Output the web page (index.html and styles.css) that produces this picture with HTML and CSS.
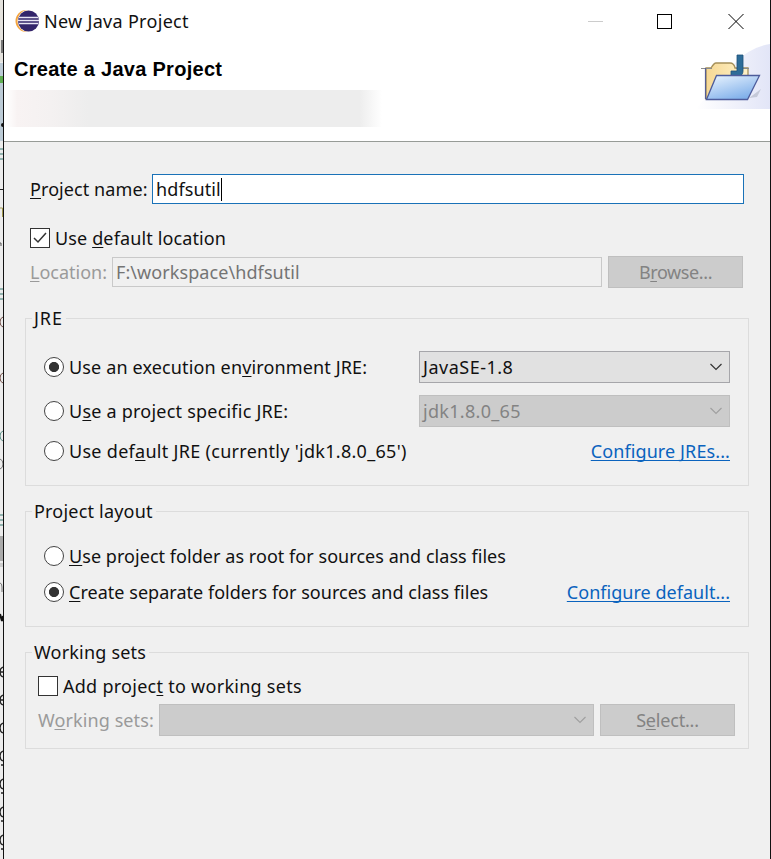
FILE: index.html
```
<!DOCTYPE html>
<html lang="en">
<head>
  <meta charset="UTF-8">
  <meta name="viewport" content="width=device-width, initial-scale=1.0">
  <title>New Java Project</title>
  <link rel="stylesheet" href="styles.css">
</head>
<body>
  <!-- Sliver of the editor behind the dialog -->
  <svg class="backdrop" width="3" height="859" viewBox="0 0 3 859">
    <rect width="3" height="859" fill="#ececec"/>
    <rect width="3" height="62" fill="#e4e2dd"/>
    <rect x="1" y="40" width="2" height="13" fill="#777"/>
    <rect y="63" width="3" height="78" fill="#bccbd6"/>
    <rect y="76" width="3" height="7" fill="#5fae50"/>
    <circle cx="3" cy="125" r="2" fill="#111"/>
    <path d="M0 149h3M0 154h3M0 159h3M0 289h3M0 294h3M0 299h3M0 515h3M0 520h3M0 525h3" stroke="#397b72"/>
    <path d="M0 189.500h3" stroke="#222"/>
    <path d="M0 208h2.500v9" stroke="#a39a50" fill="none"/>
    <path d="M0 243h1v3" stroke="#555" fill="none"/>
    <rect y="536" width="3" height="25" fill="#aaa"/>
    <rect y="563" width="3" height="4" fill="#ccc"/>
    <path d="M0 614l2 7 1-5" stroke="#111" stroke-width="2" fill="none"/>
    <g fill="none" stroke="#777">
      <path d="M3 317q-3 1-3 5t3 5M3 373q-3 1-3 5t3 5" stroke="#74504a"/>
      <path d="M3 431q-3 1-3 5t3 5" stroke="#5b8f88"/>
      <path d="M0 459q3 1 3 5t-3 5M0 583q2 0 2 4v5"/>
    </g>
    <g fill="none" stroke="#222" stroke-width="1.300">
      <path d="M3 667q-3 1-3 5t3 5M0 672h3M3 695q-3 1-3 5t3 5M0 700h3"/>
      <path d="M3 723q-3 1-3 5t3 5M3 751q-3 1-3 5t3 5M3 779q-3 1-3 5t3 5M3 807q-3 1-3 5t3 5M3 835q-3 1-3 5t3 5"/>
      <path d="M1 765h2M1 793h2M1 821h2M1 849h2"/>
    </g>
  </svg>

  <div class="dialog">
    <header class="banner">
      <div class="titlebar">
        <svg class="logo" width="25" height="24" viewBox="0 0 25 24">
          <circle cx="11.500" cy="12" r="11" fill="#f3a33d"/>
          <circle cx="13.500" cy="12" r="11" fill="#fff"/>
          <circle cx="13.500" cy="12" r="10.500" fill="#33256b"/>
          <path d="M4 8.500h19M3 11.500h21M4 14.500h19" stroke="#e8e5f4" stroke-width="1.500"/>
        </svg>
        <span class="title">New Java Project</span>
        <svg class="window-buttons" width="160" height="20" viewBox="0 0 160 20">
          <path d="M3 10.500h15" stroke="#ccc"/>
          <rect x="72.500" y="3.500" width="14" height="14" fill="none" stroke="#000"/>
          <path d="M143.500 3l15 15M158.500 3l-15 15" stroke="#000"/>
        </svg>
      </div>
      <h1>Create a Java Project</h1>
      <div class="message"></div>
      <svg class="wizard-icon" width="74" height="68" viewBox="0 0 74 68">
        <defs>
          <linearGradient id="glow" x1="0" y1="0" x2="1" y2="0">
            <stop offset="0" stop-color="#fff"/>
            <stop offset="1" stop-color="#e2e5f7"/>
          </linearGradient>
          <linearGradient id="front" x1="0" y1="0" x2="0.600" y2="1">
            <stop offset="0" stop-color="#edf6ff"/>
            <stop offset="1" stop-color="#80b0ea"/>
          </linearGradient>
          <linearGradient id="back" x1="0" y1="0" x2="1" y2="0">
            <stop offset="0" stop-color="#f6d894"/>
            <stop offset="1" stop-color="#fff2c8"/>
          </linearGradient>
        </defs>
        <path d="M0 67Q22 40 40 20Q55 5 74 2V67Z" fill="url(#glow)"/>
        <path d="M53 56l12-9-4 8z" fill="#c5c9d8"/>
        <path d="M10 57V26h5q3-5 5-5h14q4 0 5 5h13v28z" fill="url(#back)" stroke="#a5905a" stroke-width="1.300"/>
        <path d="M5 26.500h11M40 26.500h13" stroke="#8c8c8c" stroke-width="1.200"/>
        <path d="M41 13h6v16q0 5-5 5h-7v-5h6z" fill="#2d6c98" stroke="#1d5078" stroke-width="0.800"/>
        <path d="M10.500 57.500l10-24h43l-12 24z" fill="url(#front)" stroke="#4d5c9b" stroke-width="1.300"/>
        <path d="M9.500 26v31" stroke="#565e92" stroke-width="1.200"/>
      </svg>
    </header>

    <main class="content">
      <div class="row name-row">
        <label class="name-label" for="project-name"><u>P</u>roject name:</label>
        <div class="field active" id="project-name"><span class="name-value">hdfsutil</span><i class="caret"></i></div>
      </div>

      <div class="row default-row">
        <span class="checkbox"><svg width="18" height="18" viewBox="0 0 18 18"><path d="M3 9l4 4 8-9" fill="none" stroke="#333" stroke-width="1.500"/></svg></span>
        <span class="text t-default">Use <u>d</u>efault location</span>
      </div>

      <div class="row location-row disabled">
        <span class="location-label"><u>L</u>ocation:</span>
        <div class="field location"><span class="t-path">F:\workspace\hdfsutil</span></div>
        <div class="button"><span class="t-browse">B<u>r</u>owse...</span></div>
      </div>

      <fieldset class="jre">
        <legend class="t-jre">JRE</legend>
        <div class="row option">
          <span class="radio checked"></span>
          <span class="text t-env">Use an execution en<u>v</u>ironment JRE:</span>
          <div class="select"><span class="t-se">JavaSE-1.8</span><svg width="12" height="8" viewBox="0 0 12 8"><path d="M0.500 1l5.500 5.500 5.500-5.500" fill="none" stroke="#333" stroke-width="1.200"/></svg></div>
        </div>
        <div class="row option specific">
          <span class="radio"></span>
          <span class="text t-specific">U<u>s</u>e a project specific JRE:</span>
          <div class="select off"><span class="t-jdk">jdk1.8.0_65</span><svg width="12" height="8" viewBox="0 0 12 8"><path d="M0.500 1l5.500 5.500 5.500-5.500" fill="none" stroke="#a0a0a0" stroke-width="1.200"/></svg></div>
        </div>
        <div class="row option current">
          <span class="radio"></span>
          <span class="text t-current">Use def<u>a</u>ult JRE (currently 'jdk1.8.0_65')</span>
          <a class="t-jres" href="#">Configure JREs...</a>
        </div>
      </fieldset>

      <fieldset class="layout">
        <legend class="t-layout">Project layout</legend>
        <div class="row option">
          <span class="radio"></span>
          <span class="text t-root"><u>U</u>se project folder as root for sources and class files</span>
        </div>
        <div class="row option separate">
          <span class="radio checked"></span>
          <span class="text t-separate"><u>C</u>reate separate folders for sources and class files</span>
          <a class="t-configure" href="#">Configure default...</a>
        </div>
      </fieldset>

      <fieldset class="sets">
        <legend class="t-sets">Working sets</legend>
        <div class="row add-row">
          <span class="checkbox"></span>
          <span class="text t-add">Add projec<u>t</u> to working sets</span>
        </div>
        <div class="row sets-row disabled">
          <span class="sets-label">W<u>o</u>rking sets:</span>
          <div class="select off"><span></span><svg width="12" height="8" viewBox="0 0 12 8"><path d="M0.500 1l5.500 5.500 5.500-5.500" fill="none" stroke="#a0a0a0" stroke-width="1.200"/></svg></div>
          <div class="button"><span class="t-select">S<u>e</u>lect...</span></div>
        </div>
      </fieldset>
    </main>
  </div>
</body>
</html>
```
FILE: styles.css
```
* {
  box-sizing: border-box;
}

body {
  margin: 0;
  display: flex;
  width: 771px;
  height: 859px;
  overflow: hidden;
  font-family: "Noto Sans", "Open Sans", sans-serif;
  font-size: 18px;
  line-height: 24px;
  color: #111;
  background: #f0f0f0;
}

svg {
  display: block;
  flex: none;
}

u {
  text-underline-offset: 2px;
  text-decoration-thickness: 1px;
  text-decoration-skip-ink: none;
}

a {
  margin-left: auto;
  color: #0a63be;
  text-underline-offset: 2px;
  text-decoration-thickness: 1px;
  text-decoration-skip-ink: none;
}

.dialog {
  width: 768px;
  height: 859px;
  border: solid #111;
  border-width: 0 1px;
}

.banner {
  position: relative;
  height: 142px;
  background: #fff;
  border-bottom: 1px solid #979b97;
}

.titlebar {
  display: flex;
  align-items: center;
  height: 42px;
  padding: 0 25px 0 11px;
}

.title {
  margin-left: 4px;
  letter-spacing: 0.3px;
  white-space: nowrap;
}

.window-buttons {
  margin-left: auto;
}

h1 {
  margin: 15px 0 0 10px;
  font: bold 20px/24px "Liberation Sans", Arial, sans-serif;
  letter-spacing: 0.28px;
  color: #000;
}

/* Status line, faded out */
.message {
  width: 376px;
  height: 37px;
  margin: 9px 0 0 2px;
  background: linear-gradient(90deg, #fff, #f8f3f3 3%, #f4f1f1 12%, #ededed 22%, #ededed 94%, #fff);
}

.wizard-icon {
  position: absolute;
  right: 0;
  top: 42px;
}

.content {
  padding: 32px 21px 0;
}

.row {
  display: flex;
  align-items: center;
  white-space: nowrap;
}

.name-row {
  height: 30px;
  padding: 0 5px;
}

.name-label {
  width: 122px;
  letter-spacing: 0.08px;
}

.name-value {
  letter-spacing: 0.1px;
}

.field {
  display: flex;
  align-items: center;
  height: 30px;
  padding: 0 3px;
  border: 1px solid #c9c9c9;
}

.field.active {
  flex: 1;
  background: #fff;
  border-color: #1a72b8;
}

.caret {
  width: 1px;
  height: 23px;
  background: #000;
}

.default-row {
  height: 24px;
  margin-top: 22px;
  padding-left: 5px;
}

.checkbox {
  width: 20px;
  height: 20px;
  background: #fff;
  border: 1px solid #333;
}

.text {
  margin-left: 5px;
}

.location-row {
  height: 32px;
  margin-top: 6px;
  padding: 0 6px 0 5px;
}

.disabled {
  color: #9a9a9a;
}

.location-label {
  width: 82px;
}

.field.location {
  width: 490px;
  color: #747474;
}

.button {
  display: flex;
  align-items: center;
  justify-content: center;
  width: 135px;
  height: 32px;
  margin-left: 6px;
  color: #838383;
  background: #ccc;
  border: 1px solid #bfbfbf;
}

fieldset {
  width: 724px;
  min-width: 0;
  margin: 0;
  padding: 0;
  border: 1px solid #dcdcdc;
}

legend {
  height: 24px;
  margin-left: 6px;
  padding: 0 3px 0 2px;
  white-space: nowrap;
}

.jre {
  height: 180px;
  margin-top: 18px;
}

.option {
  height: 32px;
  padding: 0 18px;
}

.jre .option:first-of-type {
  margin-top: 21px;
}

.radio {
  width: 20px;
  height: 20px;
  background: #fff;
  border: 1px solid #444;
  border-radius: 50%;
}

.radio.checked {
  background: radial-gradient(circle, #333 4.700px, #fff 5.400px);
}

.select {
  display: flex;
  align-items: center;
  justify-content: space-between;
  width: 311px;
  height: 32px;
  margin-left: auto;
  padding: 0 7px 0 3px;
  background: #e1e1e1;
  border: 1px solid #a6a6aa;
}

.select.off {
  color: #838383;
  background: #ccc;
  border-color: #bfbfbf;
}

.specific {
  margin-top: 12px;
}

.current {
  margin-top: 8px;
}

.layout {
  height: 128px;
  margin-top: 13px;
}

.layout .option:first-of-type {
  margin-top: 17px;
}

.separate {
  margin-top: 4px;
}

.sets {
  height: 109px;
  margin-top: 13px;
}

.add-row {
  height: 24px;
  margin-top: 10px;
  padding-left: 12px;
}

.sets-row {
  height: 32px;
  margin-top: 6px;
  padding: 0 13px 0 12px;
}

.sets-label {
  width: 121px;
  letter-spacing: 0.1px;
}

.sets-row .select {
  width: 435px;
  margin-left: 0;
}

/* Letter spacing per label */
.t-default {
  letter-spacing: 0.13px;
}

.t-path {
  letter-spacing: 0.08px;
}

.t-browse {
  letter-spacing: -0.4px;
}

.t-select {
  letter-spacing: -0.2px;
}

.t-jre {
  letter-spacing: 0.9px;
}

.t-env {
  letter-spacing: 0.14px;
}

.t-specific {
  letter-spacing: 0.22px;
}

.t-current {
  letter-spacing: 0.29px;
}

.t-se {
  letter-spacing: 0.5px;
}

.t-jdk {
  letter-spacing: 0.3px;
}

.t-jres {
  letter-spacing: 0.1px;
}

.t-layout,
.t-sets {
  letter-spacing: 0.2px;
}

.t-root {
  letter-spacing: 0.05px;
}

.t-separate,
.t-configure {
  letter-spacing: 0.03px;
}

.t-add {
  letter-spacing: 0.27px;
}
```
